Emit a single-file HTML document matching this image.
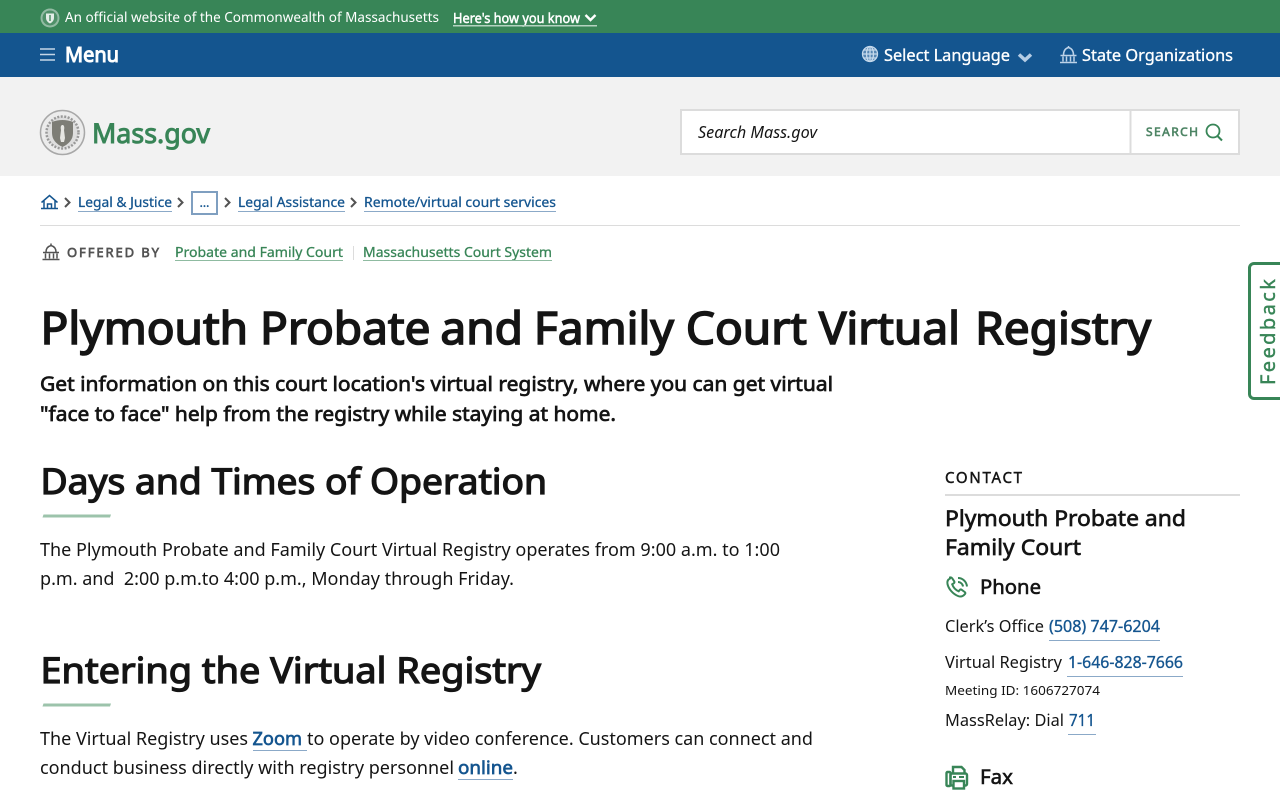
<!DOCTYPE html>
<html lang="en"><head><meta charset="utf-8"><title>Plymouth Probate and Family Court Virtual Registry</title>
<style>
html,body{margin:0;padding:0;width:1280px;height:800px;overflow:hidden;background:#fff}
svg{display:block;position:absolute;left:0;top:0}
text{font-family:"Noto Sans","Liberation Sans",sans-serif;fill:#141414;white-space:pre}
.m{stroke:#141414;stroke-width:.02em}.s{stroke:#141414;stroke-width:.036em}.h{stroke:#141414;stroke-width:.03em}
.w{fill:#fff;stroke:#fff}.g{fill:#388557;stroke:#388557}.b{fill:#14558f;stroke:#14558f}
.o{fill:#535353;stroke:#535353;stroke-width:.05em}.c{fill:#4d8464;stroke:#4d8464;stroke-width:.05em}
</style></head><body>
<svg width="1280" height="800" viewBox="0 0 1280 800" xmlns="http://www.w3.org/2000/svg">
<rect width="1280" height="33" fill="#388557"/>
<rect y="33" width="1280" height="44" fill="#14558f"/>
<rect y="77" width="1280" height="99" fill="#f2f2f2"/>

<!-- top bar -->
<circle cx="50" cy="18" r="9.500" fill="#cfe0d6" opacity=".6"/><circle cx="50" cy="18" r="7.500" fill="#4f9069"/>
<path d="M46 13.500h8v4.500q0 3.500-4 5.500q-4-2-4-5.500z" fill="#e4eee8"/><path d="M50 15v6" stroke="#4f9069" stroke-width="1.500"/>
<text style="fill:#fff;stroke:none" x="65" y="22" font-size="14" textLength="374" lengthAdjust="spacingAndGlyphs">An official website of the Commonwealth of Massachusetts</text>
<text class="w s" x="453" y="23" font-size="13.500" textLength="127" lengthAdjust="spacingAndGlyphs">Here's how you know</text>
<path d="M585.500 15l5 5 5-5" fill="none" stroke="#fff" stroke-width="2.400"/>
<rect x="453" y="25" width="144" height="1.500" fill="#b5d3c1"/>

<!-- nav -->
<path d="M40 49h15M40 54.500h15M40 60h15" stroke="#c5d6e7" stroke-width="1.500"/>
<text class="w s" x="65" y="62" font-size="20.500" style="stroke-width:.05em" textLength="54" lengthAdjust="spacingAndGlyphs">Menu</text>
<circle cx="870" cy="54" r="8" fill="#a9c5e0" opacity=".45"/>
<g fill="none" stroke="#c5d9ec" stroke-width="1.300"><circle cx="870" cy="54" r="7.500"/><ellipse cx="870" cy="54" rx="3.500" ry="7.500"/><path d="M862.500 54h15M863.500 50h13M863.500 58h13M870 46.500v15"/></g>
<text class="w m" x="884" y="61" font-size="16.500" textLength="126" lengthAdjust="spacingAndGlyphs">Select Language</text>
<path d="M1019 54.500l6 5.500 6-5.500" fill="none" stroke="#b5cde5" stroke-width="3.500"/>
<g fill="none" stroke="#bcd2e8" stroke-width="1.500"><path d="M1060.500 55.500h16M1063.500 55q0-6 5-7.500q5 1.500 5 7.500M1068.500 46v2M1060 62.500h17M1063 56.500v5M1066.500 56.500v5M1070.500 56.500v5M1074 56.500v5"/></g>
<text class="w m" x="1082" y="61" font-size="16.500" textLength="151" lengthAdjust="spacingAndGlyphs">State Organizations</text>

<!-- logo -->
<circle cx="62.500" cy="132.500" r="22" fill="#ececec" stroke="#a8a8a8" stroke-width="1.500"/>
<circle cx="62.500" cy="132.500" r="16" fill="#dedede" stroke="#999" stroke-width="2.500" stroke-dasharray="2 1.500"/>
<path d="M52 122q10.500-4 21 0v11q0 9-10.500 14q-10.500-5-10.500-14z" fill="#7d7d76"/>
<path d="M62.500 125c2 0 2 3 1.500 5l1 8 -1 4h-3l-1-4 1-8c-.5-2-.5-5 1.500-5z" fill="#e6e6e2"/>
<text class="g s" x="92" y="143" font-size="27" textLength="118" lengthAdjust="spacingAndGlyphs">Mass.gov</text>

<!-- search -->
<rect x="681" y="110" width="558" height="44" fill="#fff" stroke="#dcdcdc" stroke-width="2"/>
<rect x="1129.500" y="110" width="2" height="44" fill="#dcdcdc"/>
<text x="698" y="138" font-size="16" font-style="italic" textLength="119" lengthAdjust="spacingAndGlyphs">Search Mass.gov</text>
<text class="c" x="1146" y="136" font-size="12" textLength="52" lengthAdjust="spacing">SEARCH</text>
<circle cx="1213" cy="131" r="6.500" fill="none" stroke="#388557" stroke-width="1.800"/><path d="M1217.500 136l4.500 4.500" stroke="#388557" stroke-width="2"/>

<!-- breadcrumb -->
<path d="M41.500 202.500l8-7 8 7M44 201v7.500h11V201M47.500 208.500v-4.500h4v4.500M41 208.500h17" fill="none" stroke="#14558f" stroke-width="1.500"/>
<g fill="none" stroke="#535353" stroke-width="2"><path d="M65 198l4.500 4.500-4.500 4.500M178 198l4.500 4.500-4.500 4.500M225 198l4.500 4.500-4.500 4.500M351 198l4.500 4.500-4.500 4.500"/></g>
<text class="b m" x="78" y="207" font-size="13.500" textLength="94" lengthAdjust="spacingAndGlyphs">Legal &amp; Justice</text>
<text class="b m" x="238" y="207" font-size="13.500" textLength="107" lengthAdjust="spacingAndGlyphs">Legal Assistance</text>
<text class="b m" x="364" y="207" font-size="13.500" textLength="192" lengthAdjust="spacingAndGlyphs">Remote/virtual court services</text>
<g fill="#8ba9c8"><rect x="78" y="211" width="94" height="1"/><rect x="238" y="211" width="107" height="1"/><rect x="364" y="211" width="192" height="1"/></g>
<rect x="192" y="192" width="25" height="22" fill="#fff" stroke="#7f9fc0" stroke-width="2"/>
<text class="b m" x="199.500" y="207" font-size="13" textLength="10" lengthAdjust="spacing">...</text>
<rect x="40" y="225" width="1200" height="1" fill="#dcdcdc"/>

<!-- offered by -->
<g fill="none" stroke="#535353" stroke-width="1.500"><path d="M43 252.500h16M46 252q0-5 5-6.500q5 1.500 5 6.500M51 243.500v2M42.500 259.500h17M45.500 253.500v5M49.500 253.500v5M53.500 253.500v5M57 253.500v5"/></g>
<text class="o" x="67" y="257" font-size="13" textLength="92" lengthAdjust="spacing">OFFERED BY</text>
<text class="g m" x="175" y="257" font-size="13.500" textLength="168" lengthAdjust="spacingAndGlyphs">Probate and Family Court</text>
<text class="g m" x="363" y="257" font-size="13.500" textLength="189" lengthAdjust="spacingAndGlyphs">Massachusetts Court System</text>
<g fill="#8fbba1"><rect x="175" y="260" width="168" height="1"/><rect x="363" y="260" width="189" height="1"/></g>
<rect x="353" y="246" width="1" height="14" fill="#dcdcdc"/>

<!-- headings -->
<text class="s" x="40.500" y="344" font-size="45" textLength="1110.500" lengthAdjust="spacingAndGlyphs">Plymouth Probate <tspan dx="-2">and</tspan> <tspan dx="-1">Family</tspan> Court Virtual <tspan dx="3">Registry</tspan></text>
<text class="s" x="40" y="391" font-size="20" textLength="793" lengthAdjust="spacingAndGlyphs">Get information on this court location's virtual registry, where you can get virtual</text>
<text class="s" x="40" y="421" font-size="20" textLength="576" lengthAdjust="spacingAndGlyphs">"face to face" help from the registry while staying at home.</text>

<text class="s" x="40.500" y="494" font-size="36" textLength="506.500" lengthAdjust="spacingAndGlyphs">Days and Times of Operation</text>
<path d="M43.500 514.500h67.500l-1 3h-67.500z" fill="#9cc3ab"/>
<text x="40" y="556" font-size="18" textLength="740" lengthAdjust="spacingAndGlyphs">The Plymouth Probate and Family Court Virtual Registry operates from 9:00 a.m. to 1:00</text>
<text x="40" y="585" font-size="18" textLength="474" lengthAdjust="spacingAndGlyphs">p.m. and  2:00 p.m.to 4:00 p.m., Monday through Friday.</text>

<text class="s" x="40.500" y="683" font-size="36" textLength="500.500" lengthAdjust="spacingAndGlyphs">Entering the Virtual Registry</text>
<path d="M43.500 703.500h67.500l-1 3h-67.500z" fill="#9cc3ab"/>
<text x="40" y="745" font-size="18" textLength="208" lengthAdjust="spacingAndGlyphs">The Virtual Registry uses</text>
<text class="b s" x="252.500" y="745" font-size="18" textLength="49.500" lengthAdjust="spacingAndGlyphs">Zoom</text>
<text x="307" y="745" font-size="18" textLength="506" lengthAdjust="spacingAndGlyphs">to operate by video conference. Customers can connect and</text>
<text x="40" y="774" font-size="18" textLength="414" lengthAdjust="spacingAndGlyphs">conduct business directly with registry personnel</text>
<text class="b s" x="458" y="774" font-size="18" textLength="55" lengthAdjust="spacingAndGlyphs">online</text>
<text x="513" y="774" font-size="18">.</text>
<g fill="#8ba9c8"><rect x="253" y="750" width="54" height="1"/><rect x="458" y="779" width="55" height="1"/></g>

<!-- sidebar -->
<text class="h" x="945" y="483" font-size="15" textLength="77" lengthAdjust="spacing">CONTACT</text>
<rect x="945" y="494" width="295" height="2" fill="#dcdcdc"/>
<text class="h" x="945" y="526" font-size="22" textLength="241" lengthAdjust="spacingAndGlyphs">Plymouth Probate and</text>
<text class="h" x="945" y="555" font-size="22" textLength="136" lengthAdjust="spacingAndGlyphs">Family Court</text>

<path d="M950 578.500c-2 1-3 3-2.500 5.500c1 5 5.500 10 10.500 12c2.500 1 5 .5 7-2c.5-.7.3-1.500-.3-2l-3-2.200c-.7-.5-1.500-.4-2 .2l-1 1.300c-3-1.300-5.500-4-6.500-7l1.500-1c.7-.5.9-1.300.5-2l-2-3c-.5-.7-1.500-1-2.200-.8zM958 578c4.500 0 8.500 3.500 9 8.500M958 582c2.500 0 4.800 2 5 4.500" fill="none" stroke="#388557" stroke-width="2"/>
<text class="h" x="980" y="594" font-size="20" textLength="61" lengthAdjust="spacingAndGlyphs">Phone</text>

<text x="945" y="632" font-size="16" textLength="99" lengthAdjust="spacingAndGlyphs">Clerk’s Office</text>
<text class="b m" x="1049" y="632" font-size="16" textLength="111" lengthAdjust="spacingAndGlyphs">(508) 747-6204</text>
<rect x="1049" y="640" width="111" height="1" fill="#8ba9c8"/>
<text x="945" y="668" font-size="16" textLength="117" lengthAdjust="spacingAndGlyphs">Virtual Registry</text>
<text class="b m" x="1068" y="668" font-size="16" textLength="115" lengthAdjust="spacingAndGlyphs">1-646-828-7666</text>
<rect x="1067" y="676" width="116" height="1" fill="#8ba9c8"/>
<text x="945" y="695" font-size="13" textLength="155" lengthAdjust="spacingAndGlyphs">Meeting ID: 1606727074</text>
<text x="945" y="726" font-size="16" textLength="119" lengthAdjust="spacingAndGlyphs">MassRelay: Dial</text>
<text class="b m" x="1069" y="726" font-size="16" textLength="26" lengthAdjust="spacingAndGlyphs">711</text>
<rect x="1068" y="734" width="28" height="1" fill="#8ba9c8"/>

<g fill="none" stroke="#388557" stroke-width="2.400"><rect x="946.500" y="772" width="4" height="14" rx="1"/><rect x="950.500" y="773.500" width="16.500" height="12" rx="1.500"/><path d="M953 773v-6h8.500l3 3v3"/><rect x="953.500" y="781" width="10.500" height="7.500" fill="#fff"/></g>
<path d="M953 777h3M959 777h5" stroke="#388557" stroke-width="2"/>
<text class="h" x="980" y="784" font-size="20" textLength="33" lengthAdjust="spacingAndGlyphs">Fax</text>

<!-- feedback -->
<path d="M1280 263.500h-26a4.500 4.500 0 0 0-4.500 4.500v126a4.500 4.500 0 0 0 4.500 4.500h26" fill="#fff" stroke="#388557" stroke-width="3"/>
<text class="g m" transform="translate(1275 385) rotate(-90)" x="0" y="0" font-size="20" textLength="106" lengthAdjust="spacing">Feedback</text>
</svg>
</body></html>
